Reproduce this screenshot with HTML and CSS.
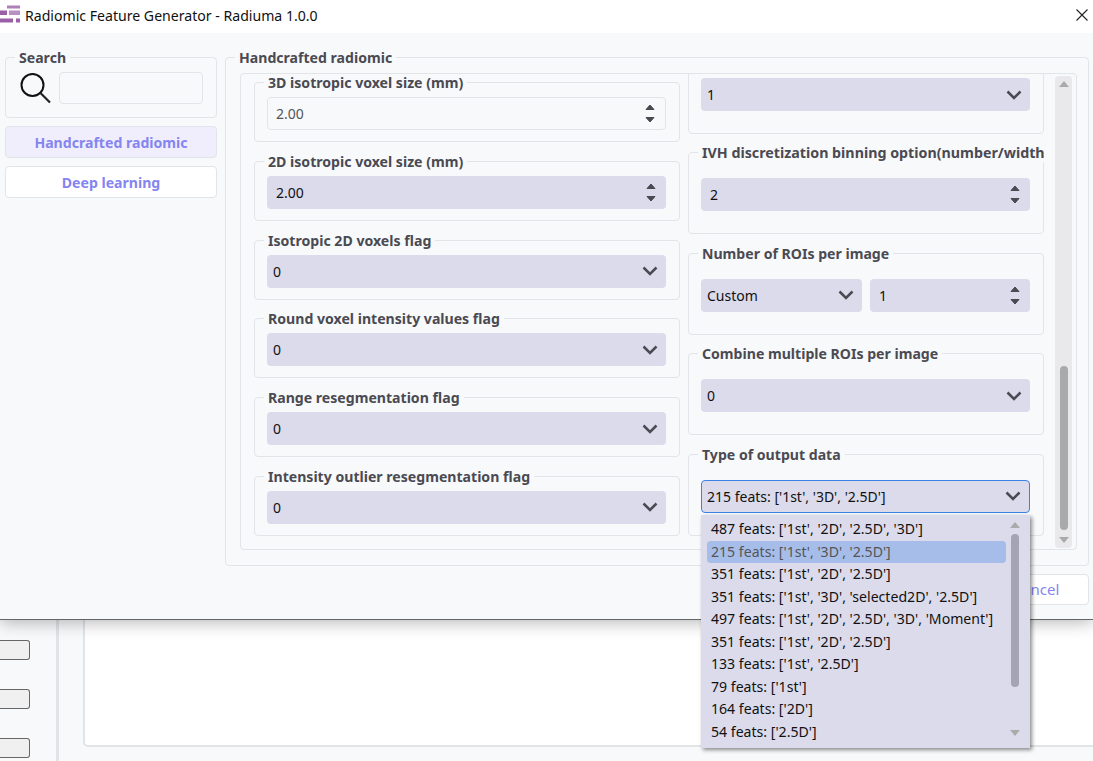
FILE: index.html
```html
<!DOCTYPE html>
<html lang="en">
<head>
    <meta charset="UTF-8">
    <title>Radiomic Feature Generator - Radiuma 1.0.0</title>
    <link rel="stylesheet" href="styles.css">
</head>
<body>
    <!-- main window, mostly hidden by the dialog -->
    <div class="backdrop">
        <div class="side-buttons">
            <div class="side-btn"></div>
            <div class="side-btn"></div>
            <div class="side-btn"></div>
        </div>
        <div class="divider"></div>
        <div class="canvas-box"></div>
    </div>

    <div class="dialog">
        <div class="titlebar">
            <svg class="app-icon" width="20" height="24" viewBox="0 0 20 24" fill="#9b5fa8">
                <rect x="7" y="0.500" width="13" height="3" opacity="0.8"/>
                <rect x="0" y="5.500" width="7" height="4.500"/>
                <rect x="9" y="5.500" width="11" height="4.500" opacity="0.7"/>
                <rect x="0" y="13.500" width="13" height="4"/>
                <rect x="16" y="13.500" width="4" height="4"/>
            </svg>
            <span class="title">Radiomic Feature Generator - Radiuma 1.0.0</span>
            <svg class="close-icon" width="12" height="12" viewBox="0 0 12 12">
                <path d="M.5.5l11 11M11.5.5l-11 11" stroke="#222" stroke-width="1.1" fill="none"/>
            </svg>
        </div>

        <div class="dialog-body">
            <div class="sidebar">
                <div class="group search-group">
                    <span class="legend">Search</span>
                    <div class="search-row">
                        <svg class="search-icon" width="32" height="32" viewBox="0 0 32 32">
                            <circle cx="12.500" cy="13" r="11" stroke="#111" stroke-width="2" fill="none"/>
                            <path d="M20.500 21l9.500 9.500" stroke="#222" stroke-width="2.200" fill="none"/>
                        </svg>
                        <div class="search-input"></div>
                    </div>
                </div>
                <div class="nav-btn active">Handcrafted radiomic</div>
                <div class="nav-btn">Deep learning</div>
            </div>

            <div class="group main-group">
                <span class="legend">Handcrafted radiomic</span>
                <div class="scroll-frame">
                    <div class="columns">
                        <div class="col left-col">
                            <div class="group field">
                                <span class="legend">3D isotropic voxel size (mm)</span>
                                <div class="control spinbox disabled"><span>2.00</span><svg class="spin" width="10" height="19" viewBox="0 0 10 19"><path d="M5 1l4 4.500H1zM5 18l4-4.500H1z"/></svg></div>
                            </div>
                            <div class="group field">
                                <span class="legend">2D isotropic voxel size (mm)</span>
                                <div class="control spinbox"><span>2.00</span><svg class="spin" width="10" height="19" viewBox="0 0 10 19"><path d="M5 1l4 4.500H1zM5 18l4-4.500H1z"/></svg></div>
                            </div>
                            <div class="group field">
                                <span class="legend">Isotropic 2D voxels flag</span>
                                <div class="control"><span>0</span><svg class="chev" width="16" height="10" viewBox="0 0 16 10"><path d="M1.500 1.500L8 8l6.500-6.500"/></svg></div>
                            </div>
                            <div class="group field">
                                <span class="legend">Round voxel intensity values flag</span>
                                <div class="control"><span>0</span><svg class="chev" width="16" height="10" viewBox="0 0 16 10"><path d="M1.500 1.500L8 8l6.500-6.500"/></svg></div>
                            </div>
                            <div class="group field">
                                <span class="legend">Range resegmentation flag</span>
                                <div class="control"><span>0</span><svg class="chev" width="16" height="10" viewBox="0 0 16 10"><path d="M1.500 1.500L8 8l6.500-6.500"/></svg></div>
                            </div>
                            <div class="group field">
                                <span class="legend">Intensity outlier resegmentation flag</span>
                                <div class="control"><span>0</span><svg class="chev" width="16" height="10" viewBox="0 0 16 10"><path d="M1.500 1.500L8 8l6.500-6.500"/></svg></div>
                            </div>
                        </div>

                        <div class="col right-col">
                            <div class="group field tall">
                                <div class="control"><span>1</span><svg class="chev" width="16" height="10" viewBox="0 0 16 10"><path d="M1.500 1.500L8 8l6.500-6.500"/></svg></div>
                            </div>
                            <div class="group field tall">
                                <span class="legend cut">IVH discretization binning option(number/width</span>
                                <div class="control spinbox"><span>2</span><svg class="spin" width="10" height="19" viewBox="0 0 10 19"><path d="M5 1l4 4.500H1zM5 18l4-4.500H1z"/></svg></div>
                            </div>
                            <div class="group field tall">
                                <span class="legend">Number of ROIs per image</span>
                                <div class="pair">
                                    <div class="control"><span>Custom</span><svg class="chev" width="16" height="10" viewBox="0 0 16 10"><path d="M1.500 1.500L8 8l6.500-6.500"/></svg></div>
                                    <div class="control spinbox"><span>1</span><svg class="spin" width="10" height="19" viewBox="0 0 10 19"><path d="M5 1l4 4.500H1zM5 18l4-4.500H1z"/></svg></div>
                                </div>
                            </div>
                            <div class="group field tall">
                                <span class="legend">Combine multiple ROIs per image</span>
                                <div class="control"><span>0</span><svg class="chev" width="16" height="10" viewBox="0 0 16 10"><path d="M1.500 1.500L8 8l6.500-6.500"/></svg></div>
                            </div>
                            <div class="group field tall">
                                <span class="legend">Type of output data</span>
                                <div class="control focused"><span>215 feats: ['1st', '3D', '2.5D']</span><svg class="chev" width="16" height="10" viewBox="0 0 16 10"><path d="M1.500 1.500L8 8l6.500-6.500"/></svg></div>
                            </div>
                        </div>
                    </div>
                    <div class="scrollbar">
                        <svg class="arrow" width="10" height="6" viewBox="0 0 10 6"><path d="M5 0l5 6H0z"/></svg>
                        <div class="thumb-track"><div class="thumb"></div></div>
                        <svg class="arrow" width="10" height="6" viewBox="0 0 10 6"><path d="M5 6l5-6H0z"/></svg>
                    </div>
                </div>
            </div>
        </div>

        <div class="cancel-btn">Cancel</div>
    </div>

    <!-- open combo list -->
    <div class="popup">
        <div class="items">
            <div class="item">487 feats: ['1st', '2D', '2.5D', '3D']</div>
            <div class="item selected">215 feats: ['1st', '3D', '2.5D']</div>
            <div class="item">351 feats: ['1st', '2D', '2.5D']</div>
            <div class="item">351 feats: ['1st', '3D', 'selected2D', '2.5D']</div>
            <div class="item">497 feats: ['1st', '2D', '2.5D', '3D', 'Moment']</div>
            <div class="item">351 feats: ['1st', '2D', '2.5D']</div>
            <div class="item">133 feats: ['1st', '2.5D']</div>
            <div class="item">79 feats: ['1st']</div>
            <div class="item">164 feats: ['2D']</div>
            <div class="item">54 feats: ['2.5D']</div>
        </div>
        <div class="popup-scroll">
            <svg class="arrow" width="10" height="6" viewBox="0 0 10 6"><path d="M5 0l5 6H0z"/></svg>
            <div class="popup-track"><div class="popup-thumb"></div></div>
            <svg class="arrow" width="10" height="6" viewBox="0 0 10 6"><path d="M5 6l5-6H0z"/></svg>
        </div>
    </div>
</body>
</html>
```

FILE: styles.css
```css
* {
    box-sizing: border-box;
}
html, body {
    margin: 0;
    height: 100%;
    overflow: hidden;
}
body {
    position: relative;
    font-family: "Noto Sans", Arial, sans-serif;
    font-size: 14px;
    color: #111;
    background: #f8f9fb;
}

/* main window behind the dialog */
.backdrop {
    display: flex;
    height: 761px;
    padding-top: 619px;
}
.side-buttons {
    width: 30px;
    padding-top: 21px;
    display: flex;
    flex-direction: column;
    gap: 29px;
}
.side-btn {
    height: 20px;
    background: #f0f0f0;
    border: 1px solid #666;
    border-left: none;
    border-radius: 0 3px 3px 0;
}
.divider {
    width: 3px;
    margin-left: 26px;
    background: #e2e3e6;
}
.canvas-box {
    flex: 1;
    margin: 0 0 14px 24px;
    background: #fff;
    border: 2px solid #e3e4e6;
    border-right: none;
    border-top: none;
    border-radius: 0 0 0 5px;
}

/* dialog */
.dialog {
    position: absolute;
    left: 0;
    top: 0;
    width: 1093px;
    height: 620px;
    background: #f8f9fb;
    border-bottom: 1px solid #666;
    box-shadow: 0 2px 16px rgba(0, 0, 0, 0.3);
}
.titlebar {
    position: relative;
    height: 33px;
    background: #fff;
    display: flex;
    align-items: center;
}
.app-icon {
    margin-right: 5px;
}
.title {
    font-size: 14.1px;
    color: #111;
    margin-bottom: 2px;
}
.close-icon {
    position: absolute;
    right: 5px;
    top: 9px;
}
.dialog-body {
    display: flex;
    padding: 24px 4px 0 5px;
    gap: 8px;
}

.group {
    position: relative;
    border: 1px solid #e3e4e7;
    border-radius: 4px;
}
.legend {
    position: absolute;
    left: 9px;
    top: -10px;
    padding: 0 4px;
    background: #f8f9fb;
    font-weight: 700;
    font-size: 14.1px;
    line-height: 19px;
    color: #4a4a52;
    white-space: nowrap;
}
.legend.cut {
    max-width: 347px;
    padding-right: 0;
    overflow: hidden;
    font-size: 14.25px;
}

/* left sidebar */
.sidebar {
    width: 212px;
    flex-shrink: 0;
}
.search-group {
    height: 61px;
    margin-bottom: 8px;
}
.search-row {
    display: flex;
    align-items: flex-start;
    padding: 14px 13px 0 14px;
    gap: 7px;
}
.search-icon {
    flex-shrink: 0;
}
.search-input {
    flex: 1;
    height: 32px;
    border: 1px solid #e3e4e7;
    border-radius: 4px;
}
.nav-btn {
    height: 32px;
    margin-bottom: 8px;
    background: #fff;
    border: 1px solid #e3e4e7;
    border-radius: 4px;
    color: #8585f0;
    font-weight: 700;
    font-size: 14.1px;
    text-align: center;
    line-height: 32px;
}
.nav-btn.active {
    background: #f0eefc;
}

/* right side */
.main-group {
    flex: 1;
    height: 509px;
    padding: 15px 11px 0 14px;
}
.scroll-frame {
    display: flex;
    height: 477px;
    border: 1px solid #e3e4e7;
    border-radius: 4px;
    overflow: hidden;
    padding-right: 4px;
}
.columns {
    flex: 1;
    display: flex;
    overflow: hidden;
    padding-left: 13px;
    gap: 8px;
}
.col {
    display: flex;
    flex-direction: column;
}
.left-col {
    width: 426px;
    padding-top: 8px;
    gap: 18.8px;
}
.right-col {
    width: 356px;
    margin-top: -22px;
    gap: 18.4px;
}
.field {
    height: 60px;
    flex-shrink: 0;
    padding: 14px 13px 0 12px;
}
.field.tall {
    height: 82px;
    padding-top: 25px;
}
.control {
    height: 33px;
    display: flex;
    flex: 1;
    align-items: center;
    justify-content: space-between;
    padding: 0 8px 0 6px;
    background: #dcdbeb;
    border-radius: 4px;
    color: #111;
    font-size: 14px;
}
.control.spinbox {
    padding-left: 9px;
    padding-right: 10px;
}
.control.disabled {
    background: #f8f9fb;
    border: 1px solid #e3e4e7;
    padding-left: 8px;
    color: #555;
}
.control.focused {
    border: 1px solid #3b82e6;
    padding-left: 5px;
}
.chev {
    fill: none;
    stroke: #4a4a52;
    stroke-width: 2.5;
}
.spin {
    fill: #4a4a52;
    stroke: #4a4a52;
    stroke-width: 1;
    stroke-linejoin: round;
}
.pair {
    display: flex;
    gap: 8px;
}
.pair .control:first-child {
    flex: 0 0 161px;
}

.scrollbar {
    width: 17px;
    margin: 2px 0 1px 0;
    background: #e9e9ec;
    border-radius: 4px;
    display: flex;
    flex-direction: column;
    align-items: center;
    padding: 5px 0;
}
.arrow {
    fill: #a9abab;
    flex-shrink: 0;
}
.thumb-track {
    flex: 1;
    width: 100%;
    display: flex;
    justify-content: center;
    align-items: flex-end;
}
.thumb {
    width: 8px;
    height: 164px;
    margin-bottom: 7px;
    background: #a9abab;
    border-radius: 4px;
}

.cancel-btn {
    position: absolute;
    left: 979px;
    top: 574px;
    width: 110px;
    height: 31px;
    padding-left: 4px;
    background: #fff;
    border: 1px solid #e3e4e7;
    border-radius: 4px;
    color: #8585f0;
    font-size: 15px;
    line-height: 29px;
    text-align: center;
}

/* combo popup */
.popup {
    position: absolute;
    left: 701px;
    top: 515px;
    width: 329px;
    height: 233px;
    display: flex;
    background: #dcdbeb;
    box-shadow: 2px 2px 4px rgba(0, 0, 0, 0.45);
}
.items {
    flex: 1;
    padding: 3px 0 0 6px;
}
.item {
    height: 22.5px;
    padding-left: 4px;
    line-height: 22px;
    font-size: 14.1px;
    color: #111;
    white-space: nowrap;
}
.item.selected {
    background: #a6bdea;
    border-radius: 4px;
    color: #555;
}
.popup-scroll {
    width: 17px;
    margin-right: 7px;
    padding: 7px 0 12px;
    display: flex;
    flex-direction: column;
    align-items: center;
}
.popup-track {
    flex: 1;
    padding-top: 6px;
    display: flex;
    justify-content: center;
}
.popup-thumb {
    width: 8px;
    height: 153px;
    background: #a5a3b4;
    border-radius: 4px;
}
```
